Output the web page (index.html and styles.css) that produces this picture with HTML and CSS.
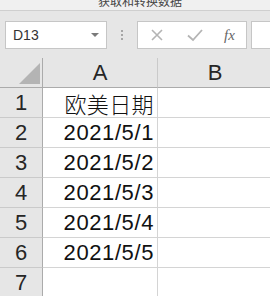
FILE: index.html
```html
<!DOCTYPE html>
<html>
<head>
<meta charset="utf-8">
<link rel="stylesheet" href="styles.css">
</head>
<body>
<div class="titlebar"><span class="title">获取和转换数据</span></div>
<div class="toolbar">
  <div class="namebox">
    <span class="ref">D13</span>
    <span class="caret"></span>
  </div>
  <div class="dots"><i></i><i></i><i></i></div>
  <div class="fbtns">
    <svg class="ic" width="16" height="16" viewBox="0 0 16 16"><path d="M3 3 L13 13 M13 3 L3 13" stroke="#b4b4b4" stroke-width="1.6" fill="none"/></svg>
    <svg class="ic" width="18" height="16" viewBox="0 0 18 16"><path d="M2 8.5 L7 13 L16 3" stroke="#b4b4b4" stroke-width="1.8" fill="none"/></svg>
    <span class="fx">fx</span>
  </div>
  <div class="fbar"></div>
</div>
<div class="grid">
  <div class="corner"><span class="tri"></span></div>
  <div class="ch">A</div>
  <div class="ch">B</div>

  <div class="rh">1</div><div class="c cjk">欧美日期</div><div class="c"></div>
  <div class="rh">2</div><div class="c">2021/5/1</div><div class="c"></div>
  <div class="rh">3</div><div class="c">2021/5/2</div><div class="c"></div>
  <div class="rh">4</div><div class="c">2021/5/3</div><div class="c"></div>
  <div class="rh">5</div><div class="c">2021/5/4</div><div class="c"></div>
  <div class="rh">6</div><div class="c">2021/5/5</div><div class="c"></div>
  <div class="rh">7</div><div class="c"></div><div class="c"></div>
</div>
</body>
</html>
```

FILE: styles.css
```css
* { box-sizing: border-box; }
html, body { margin: 0; padding: 0; }
body {
  width: 270px;
  height: 296px;
  overflow: hidden;
  background: #e6e6e6;
  font-family: "Liberation Sans", "Noto Sans CJK SC", sans-serif;
}
.titlebar {
  height: 11px;
  background: #f0f0f0;
  border-bottom: 1px solid #cfcfcf;
  overflow: hidden;
  text-align: center;
}
.title {
  display: block;
  font-family: "Noto Sans CJK SC", sans-serif;
  font-size: 12px;
  line-height: 12px;
  color: #444;
  margin-top: -5px;
  padding-left: 10px;
}
.toolbar {
  display: flex;
  align-items: center;
  height: 47px;
  padding-top: 10px;
  padding-bottom: 9px;
}
.namebox {
  margin-left: 5px;
  width: 102px;
  height: 28px;
  background: #fff;
  border: 1px solid #c6c6c6;
  display: flex;
  align-items: center;
  padding-left: 7px;
  padding-right: 6px;
}
.ref {
  flex: 1;
  font-size: 14px;
  color: #333;
}
.caret {
  width: 0;
  height: 0;
  border-left: 4px solid transparent;
  border-right: 4px solid transparent;
  border-top: 4px solid #7a7a7a;
  margin-right: 1px;
}
.dots {
  width: 30px;
  display: flex;
  flex-direction: column;
  align-items: center;
  gap: 2px;
}
.dots i {
  display: block;
  width: 2px;
  height: 2px;
  background: #a6a6a6;
}
.fbtns {
  width: 110px;
  height: 28px;
  background: #fff;
  border: 1px solid #c6c6c6;
  display: flex;
  align-items: center;
  padding-left: 11px;
}
.fbtns .ic { display: block; }
.fbtns .ic:nth-child(2) { margin-left: 21px; }
.fx {
  margin-left: 20px;
  font-family: "Liberation Serif", serif;
  font-style: italic;
  font-size: 15px;
  color: #666;
}
.fbar {
  margin-left: 4px;
  flex: 1;
  height: 28px;
  background: #fff;
  border: 1px solid #c6c6c6;
  border-right: none;
}
.grid {
  display: grid;
  grid-template-columns: 43px 115px 115px;
  grid-auto-rows: 30px;
  background: #fff;
}
.corner, .ch, .rh {
  background: #e6e6e6;
  font-size: 22px;
  color: #262626;
  display: flex;
  align-items: center;
  justify-content: center;
}
.corner {
  border-right: 1px solid #ababab;
  border-bottom: 1px solid #ababab;
  position: relative;
}
.tri {
  position: absolute;
  right: 2px;
  bottom: 3px;
  width: 0;
  height: 0;
  border-left: 21px solid transparent;
  border-bottom: 21px solid #b4b4b4;
}
.ch {
  border-bottom: 1px solid #ababab;
  border-right: 1px solid #cacaca;
  padding-top: 1px;
}
.rh {
  border-right: 1px solid #ababab;
  border-bottom: 1px solid #cacaca;
  padding-top: 1px;
}
.c {
  border-right: 1px solid #d4d4d4;
  border-bottom: 1px solid #d4d4d4;
  font-size: 22px;
  color: #111;
  display: flex;
  align-items: center;
  justify-content: flex-end;
  padding-right: 3px;
  padding-top: 1px;
  letter-spacing: 0.6px;
  font-family: "Liberation Sans", "Noto Sans CJK SC", sans-serif;
}
.c.cjk {
  letter-spacing: 0.4px;
  font-weight: 300;
}
```
